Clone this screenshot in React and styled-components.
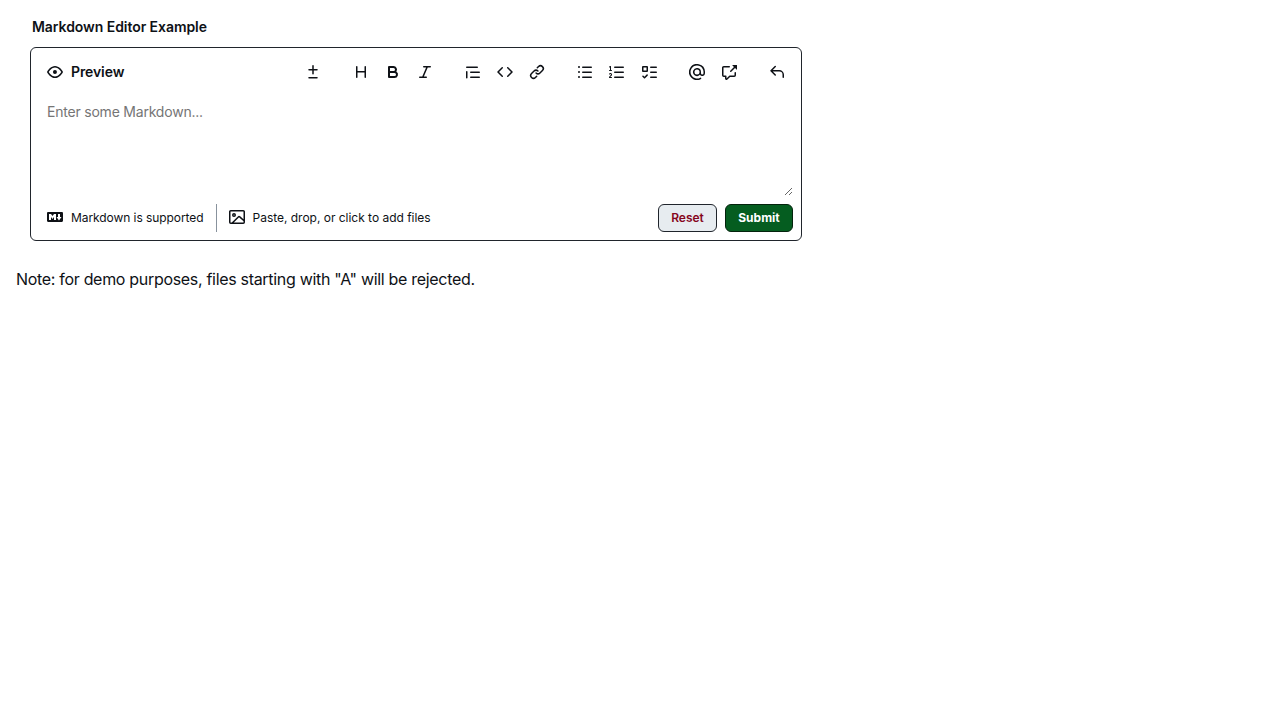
import React from "react";
import styled, { createGlobalStyle } from "styled-components";

const GlobalStyle = createGlobalStyle`
  * { box-sizing: border-box; }
  body {
    margin: 0;
    background: #ffffff;
    color: #0e1116;
    font-family: Inter, "Liberation Sans", sans-serif;
  }
  button, textarea { font-family: inherit; }
`;

const Page = styled.main`
  padding: 16px;
`;

const Field = styled.fieldset`
  width: 772px;
  margin: 0 0 0 14px;
  padding: 0;
  border: 0;
`;

const Label = styled.div`
  height: 21px;
  margin: 0 0 10px 2px;
  font-size: 14px;
  line-height: 21px;
  font-weight: 600;
  letter-spacing: -0.06px;
`;

const Editor = styled.div`
  display: flex;
  flex-direction: column;
  height: 194px;
  padding: 8px;
  border: 1px solid #20252c;
  border-radius: 6px;
`;

const Toolbar = styled.div`
  display: flex;
  align-items: center;
  justify-content: space-between;
  height: 32px;
`;

const ViewSwitch = styled.button`
  display: flex;
  align-items: center;
  gap: 8px;
  height: 32px;
  padding: 0 8px;
  border: 0;
  background: transparent;
  color: #0e1116;
  font-size: 14px;
  font-weight: 600;
  letter-spacing: -0.1px;
  span { padding-bottom: 2px; }
`;

const ToolGroups = styled.div`
  display: flex;
  gap: 16px;
`;

const ToolGroup = styled.div`
  display: flex;
`;

const ToolButton = styled.button`
  display: flex;
  align-items: center;
  justify-content: center;
  width: 32px;
  height: 32px;
  padding: 0;
  border: 0;
  background: transparent;
  color: #0e1116;
`;

const Input = styled.textarea`
  display: block;
  width: 100%;
  height: 100px;
  margin: 8px 0;
  padding: 5px 8px 8px;
  border: 0;
  outline: 0;
  resize: vertical;
  background: transparent;
  color: #0e1116;
  font-size: 14px;
  line-height: 21px;
  letter-spacing: -0.21px;
  &::placeholder { color: #757575; opacity: 1; }
`;

const Footer = styled.div`
  display: flex;
  align-items: center;
  justify-content: space-between;
  height: 28px;
`;

const Hints = styled.div`
  display: flex;
  align-items: center;
  height: 28px;
`;

const Hint = styled.button`
  display: flex;
  align-items: center;
  gap: 8px;
  height: 28px;
  padding: 0 ${(p) => p.$end || "0"} 2px ${(p) => p.$start || "8px"};
  border: 0;
  background: transparent;
  color: #0e1116;
  font-size: 12px;
  letter-spacing: ${(p) => p.$tracking};
  white-space: nowrap;
`;

const Divider = styled.span`
  width: 1px;
  height: 28px;
  background: #88929d;
`;

const Actions = styled.div`
  display: flex;
  gap: 8px;
`;

const ActionButton = styled.button`
  width: ${(p) => p.$width};
  height: 28px;
  padding: 0 0 2px;
  border: 1px solid ${(p) => (p.$primary ? "#04230d" : "#20252c")};
  border-radius: 6px;
  background: ${(p) => (p.$primary ? "#055d20" : "#e7ecf0")};
  color: ${(p) => (p.$primary ? "#ffffff" : "#86061d")};
  font-size: 12px;
  font-weight: ${(p) => (p.$primary ? 700 : 600)};
`;

const Note = styled.p`
  margin: 26px 0 0;
  font-size: 16px;
  line-height: 24px;
  letter-spacing: -0.31px;
`;

const paths = {
  eye: "M8 2c1.981 0 3.671.992 4.933 2.078 1.27 1.091 2.187 2.345 2.637 3.023a1.62 1.62 0 0 1 0 1.798c-.45.678-1.367 1.932-2.637 3.023C11.67 13.008 9.981 14 8 14c-1.981 0-3.671-.992-4.933-2.078C1.797 10.83.88 9.576.43 8.898a1.62 1.62 0 0 1 0-1.798c.45-.677 1.367-1.931 2.637-3.022C4.33 2.992 6.019 2 8 2ZM1.679 7.932a.12.12 0 0 0 0 .136c.411.622 1.241 1.75 2.366 2.717C5.176 11.758 6.527 12.5 8 12.5c1.473 0 2.825-.742 3.955-1.715 1.124-.967 1.954-2.096 2.366-2.717a.12.12 0 0 0 0-.136c-.412-.621-1.242-1.75-2.366-2.717C10.824 4.242 9.473 3.5 8 3.5c-1.473 0-2.825.742-3.955 1.715-1.124.967-1.954 2.096-2.366 2.717ZM8 10a2 2 0 1 1-.001-3.999A2 2 0 0 1 8 10Z",
  diff: "M8.75 1.75V5H12a.75.75 0 0 1 0 1.5H8.75v3.25a.75.75 0 0 1-1.5 0V6.5H4A.75.75 0 0 1 4 5h3.25V1.75a.75.75 0 0 1 1.5 0ZM4 13h8a.75.75 0 0 1 0 1.5H4A.75.75 0 0 1 4 13Z",
  heading: "M3.75 2a.75.75 0 0 1 .75.75V7h7V2.75a.75.75 0 0 1 1.5 0v10.5a.75.75 0 0 1-1.5 0V8.5h-7v4.75a.75.75 0 0 1-1.5 0V2.75A.75.75 0 0 1 3.75 2Z",
  bold: "M4 2h4.5a3.501 3.501 0 0 1 2.852 5.53A3.499 3.499 0 0 1 9.5 14H4a1 1 0 0 1-1-1V3a1 1 0 0 1 1-1Zm1 7v3h4.5a1.5 1.5 0 0 0 0-3Zm3.5-2a1.5 1.5 0 0 0 0-3H5v3Z",
  italic: "M6 2.75A.75.75 0 0 1 6.75 2h6.5a.75.75 0 0 1 0 1.5h-2.505l-3.858 9H9.25a.75.75 0 0 1 0 1.5h-6.5a.75.75 0 0 1 0-1.5h2.505l3.858-9H6.75A.75.75 0 0 1 6 2.75Z",
  quote: "M1.75 2.5h10.5a.75.75 0 0 1 0 1.5H1.75a.75.75 0 0 1 0-1.5Zm4 5h8.5a.75.75 0 0 1 0 1.5h-8.5a.75.75 0 0 1 0-1.5Zm0 5h8.5a.75.75 0 0 1 0 1.5h-8.5a.75.75 0 0 1 0-1.5ZM2.5 7.75v6a.75.75 0 0 1-1.5 0v-6a.75.75 0 0 1 1.5 0Z",
  code: "m11.28 3.22 4.25 4.25a.75.75 0 0 1 0 1.06l-4.25 4.25a.749.749 0 0 1-1.275-.326.749.749 0 0 1 .215-.734L13.94 8l-3.72-3.72a.749.749 0 0 1 .326-1.275.749.749 0 0 1 .734.215Zm-6.56 0a.751.751 0 0 1 1.042.018.751.751 0 0 1 .018 1.042L2.06 8l3.72 3.72a.749.749 0 0 1-.326 1.275.749.749 0 0 1-.734-.215L.47 8.53a.75.75 0 0 1 0-1.06Z",
  link: "m7.775 3.275 1.25-1.25a3.5 3.5 0 1 1 4.95 4.95l-2.5 2.5a3.5 3.5 0 0 1-4.95 0 .751.751 0 0 1 .018-1.042.751.751 0 0 1 1.042-.018 1.998 1.998 0 0 0 2.83 0l2.5-2.5a2.002 2.002 0 0 0-2.83-2.83l-1.25 1.25a.751.751 0 0 1-1.042-.018.751.751 0 0 1-.018-1.042Zm-4.69 9.64a1.998 1.998 0 0 0 2.83 0l1.25-1.25a.751.751 0 0 1 1.042.018.751.751 0 0 1 .018 1.042l-1.25 1.25a3.5 3.5 0 1 1-4.95-4.95l2.5-2.5a3.5 3.5 0 0 1 4.95 0 .751.751 0 0 1-.018 1.042.751.751 0 0 1-1.042.018 1.998 1.998 0 0 0-2.83 0l-2.5 2.5a1.998 1.998 0 0 0 0 2.83Z",
  bullets: "M5.75 2.5h8.5a.75.75 0 0 1 0 1.5h-8.5a.75.75 0 0 1 0-1.5Zm0 5h8.5a.75.75 0 0 1 0 1.5h-8.5a.75.75 0 0 1 0-1.5Zm0 5h8.5a.75.75 0 0 1 0 1.5h-8.5a.75.75 0 0 1 0-1.5ZM2 14a1 1 0 1 1 0-2 1 1 0 0 1 0 2Zm1-6a1 1 0 1 1-2 0 1 1 0 0 1 2 0ZM2 4a1 1 0 1 1 0-2 1 1 0 0 1 0 2Z",
  numbers: "M5 3.25a.75.75 0 0 1 .75-.75h8.5a.75.75 0 0 1 0 1.5h-8.5A.75.75 0 0 1 5 3.25Zm0 5a.75.75 0 0 1 .75-.75h8.5a.75.75 0 0 1 0 1.5h-8.5A.75.75 0 0 1 5 8.25Zm0 5a.75.75 0 0 1 .75-.75h8.5a.75.75 0 0 1 0 1.5h-8.5a.75.75 0 0 1-.75-.75ZM.924 10.32a.5.5 0 0 1-.851-.525l.001-.001.001-.002.002-.004.007-.011c.097-.144.215-.273.348-.384.228-.19.588-.392 1.068-.392.468 0 .858.181 1.126.484.259.294.377.673.377 1.038 0 .987-.686 1.495-1.156 1.845l-.047.035c-.303.225-.522.4-.654.597h1.357a.5.5 0 0 1 0 1H.5a.5.5 0 0 1-.5-.5c0-1.005.692-1.52 1.167-1.875l.035-.025c.531-.396.8-.625.8-1.078a.57.57 0 0 0-.128-.376C1.806 10.068 1.695 10 1.5 10a.658.658 0 0 0-.429.163.835.835 0 0 0-.144.153ZM2.003 2.5V6h.503a.5.5 0 0 1 0 1H.5a.5.5 0 0 1 0-1h.503V3.308l-.28.14a.5.5 0 0 1-.446-.895l1.003-.5a.5.5 0 0 1 .723.447Z",
  tasks: "M2 2h4a1 1 0 0 1 1 1v4a1 1 0 0 1-1 1H2a1 1 0 0 1-1-1V3a1 1 0 0 1 1-1Zm4.655 8.595a.75.75 0 0 1 0 1.06L4.03 14.28a.75.75 0 0 1-1.06 0l-1.5-1.5a.749.749 0 0 1 .326-1.275.749.749 0 0 1 .734.215l.97.97 2.095-2.095a.75.75 0 0 1 1.06 0ZM9.75 2.5h5.5a.75.75 0 0 1 0 1.5h-5.5a.75.75 0 0 1 0-1.5Zm0 5h5.5a.75.75 0 0 1 0 1.5h-5.5a.75.75 0 0 1 0-1.5Zm0 5h5.5a.75.75 0 0 1 0 1.5h-5.5a.75.75 0 0 1 0-1.5Zm-7.25-9v3h3v-3Z",
  mention: "M4.75 2.37a6.501 6.501 0 0 0 6.5 11.26.75.75 0 0 1 .75 1.298A7.999 7.999 0 0 1 .989 4.148 8 8 0 0 1 16 7.75v1.5a2.75 2.75 0 0 1-5.072 1.475 3.999 3.999 0 0 1-6.65-4.19A4 4 0 0 1 12 8v1.25a1.25 1.25 0 0 0 2.5 0V7.867a6.5 6.5 0 0 0-9.75-5.496ZM10.5 8a2.5 2.5 0 1 0-5 0 2.5 2.5 0 0 0 5 0Z",
  reference: "M2.75 3.5a.25.25 0 0 0-.25.25v7.5c0 .138.112.25.25.25h2a.75.75 0 0 1 .75.75v2.19l2.72-2.72a.749.749 0 0 1 .53-.22h4.5a.25.25 0 0 0 .25-.25v-2.5a.75.75 0 0 1 1.5 0v2.5A1.75 1.75 0 0 1 13.25 13H9.06l-2.573 2.573A1.458 1.458 0 0 1 4 14.543V13H2.75A1.75 1.75 0 0 1 1 11.25v-7.5C1 2.784 1.784 2 2.75 2h5.5a.75.75 0 0 1 0 1.5ZM16 1.25v4.146a.25.25 0 0 1-.427.177L14.03 4.03l-3.75 3.75a.749.749 0 0 1-1.275-.326.749.749 0 0 1 .215-.734l3.75-3.75-1.543-1.543A.25.25 0 0 1 11.604 1h4.146a.25.25 0 0 1 .25.25Z",
  reply: "M6.78 1.97a.75.75 0 0 1 0 1.06L3.81 6h6.44A4.75 4.75 0 0 1 15 10.75v2.5a.75.75 0 0 1-1.5 0v-2.5a3.25 3.25 0 0 0-3.25-3.25H3.81l2.97 2.97a.749.749 0 0 1-.326 1.275.749.749 0 0 1-.734-.215L1.47 7.28a.75.75 0 0 1 0-1.06l4.25-4.25a.75.75 0 0 1 1.06 0Z",
  markdown: "M14.85 3c.63 0 1.15.52 1.14 1.15v7.7c0 .63-.51 1.15-1.15 1.15H1.15C.52 13 0 12.48 0 11.84V4.15C0 3.52.52 3 1.15 3ZM9 11V5H7L5.5 7 4 5H2v6h2V8l1.5 1.92L7 8v3Zm2.99.5L14.5 8H13V5h-2v3H9.5Z",
  image: "M16 13.25A1.75 1.75 0 0 1 14.25 15H1.75A1.75 1.75 0 0 1 0 13.25V2.75C0 1.784.784 1 1.75 1h12.5c.966 0 1.75.784 1.75 1.75ZM1.75 2.5a.25.25 0 0 0-.25.25v10.5c0 .138.112.25.25.25h.94l.03-.03 6.077-6.078a1.75 1.75 0 0 1 2.412-.06L14.5 10.31V2.75a.25.25 0 0 0-.25-.25Zm12.5 11a.25.25 0 0 0 .25-.25v-.917l-4.298-3.889a.25.25 0 0 0-.344.009L4.81 13.5ZM7 6a2 2 0 1 1-3.999.001A2 2 0 0 1 7 6ZM5.5 6a.5.5 0 1 0-1 0 .5.5 0 0 0 1 0Z",
};

function Icon({ name }) {
  return (
    <svg width="16" height="16" viewBox="0 0 16 16" fill="currentColor" aria-hidden="true">
      <path d={paths[name]} />
    </svg>
  );
}

const groups = [
  ["diff"],
  ["heading", "bold", "italic"],
  ["quote", "code", "link"],
  ["bullets", "numbers", "tasks"],
  ["mention", "reference"],
  ["reply"],
];

export default function App() {
  return (
    <>
      <GlobalStyle />
      <Page>
        <Field>
          <Label>Markdown Editor Example</Label>
          <Editor>
            <Toolbar>
              <ViewSwitch>
                <Icon name="eye" />
                <span>Preview</span>
              </ViewSwitch>
              <ToolGroups>
                {groups.map((group) => (
                  <ToolGroup key={group[0]}>
                    {group.map((name) => (
                      <ToolButton key={name} aria-label={name}>
                        <Icon name={name} />
                      </ToolButton>
                    ))}
                  </ToolGroup>
                ))}
              </ToolGroups>
            </Toolbar>
            <Input placeholder="Enter some Markdown..." />
            <Footer>
              <Hints>
                <Hint $end="12px" $tracking="-0.07px">
                  <Icon name="markdown" />
                  <span>Markdown is supported</span>
                </Hint>
                <Divider />
                <Hint $start="12px" $tracking="-0.02px">
                  <Icon name="image" />
                  <span>Paste, drop, or click to add files</span>
                </Hint>
              </Hints>
              <Actions>
                <ActionButton $width="59px">Reset</ActionButton>
                <ActionButton $width="68px" $primary>Submit</ActionButton>
              </Actions>
            </Footer>
          </Editor>
        </Field>
        <Note>Note: for demo purposes, files starting with "A" will be rejected.</Note>
      </Page>
    </>
  );
}
